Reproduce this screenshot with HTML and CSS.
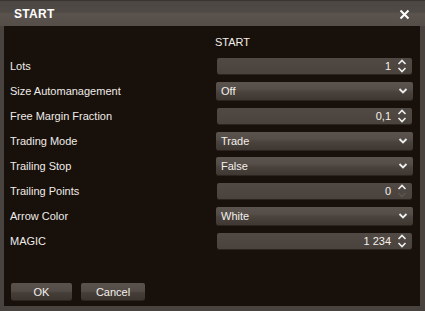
FILE: index.html
```html
<!DOCTYPE html>
<html>
<head>
<meta charset="utf-8">
<link rel="stylesheet" href="styles.css">
</head>
<body>
<div class="window">
  <div class="titlebar">
    <span class="title">START</span>
    <svg class="close" width="11" height="11" viewBox="0 0 11 11"><path d="M1.5 1.5 L9.5 9.5 M9.5 1.5 L1.5 9.5" stroke="#fff" stroke-width="2"/></svg>
  </div>
  <div class="body">
    <div class="header"><span></span><span class="htext">START</span></div>
    <div class="rows">
      <div class="row"><span class="label">Lots</span><div class="spin"><span class="val">1</span><span class="arrows"><svg width="10" height="14" viewBox="0 0 10 14"><path d="M1.5 5 L5 1.5 L8.5 5 M1.5 9 L5 12.5 L8.5 9" fill="none" stroke="#eee" stroke-width="1.6"/></svg></span></div></div>
      <div class="row"><span class="label">Size Automanagement</span><div class="select"><span>Off</span><svg width="10" height="8" viewBox="0 0 10 8"><path d="M1.5 2 L5 5.5 L8.5 2" fill="none" stroke="#eee" stroke-width="1.8"/></svg></div></div>
      <div class="row"><span class="label">Free Margin Fraction</span><div class="spin"><span class="val">0,1</span><span class="arrows"><svg width="10" height="14" viewBox="0 0 10 14"><path d="M1.5 5 L5 1.5 L8.5 5 M1.5 9 L5 12.5 L8.5 9" fill="none" stroke="#eee" stroke-width="1.6"/></svg></span></div></div>
      <div class="row"><span class="label">Trading Mode</span><div class="select"><span>Trade</span><svg width="10" height="8" viewBox="0 0 10 8"><path d="M1.5 2 L5 5.5 L8.5 2" fill="none" stroke="#eee" stroke-width="1.8"/></svg></div></div>
      <div class="row"><span class="label">Trailing Stop</span><div class="select"><span>False</span><svg width="10" height="8" viewBox="0 0 10 8"><path d="M1.5 2 L5 5.5 L8.5 2" fill="none" stroke="#eee" stroke-width="1.8"/></svg></div></div>
      <div class="row"><span class="label">Trailing Points</span><div class="spin"><span class="val">0</span><span class="arrows"><svg width="10" height="14" viewBox="0 0 10 14"><path d="M1.5 5 L5 1.5 L8.5 5" fill="none" stroke="#eee" stroke-width="1.6"/><path d="M1.5 9 L5 12.5 L8.5 9" fill="none" stroke="#5c544e" stroke-width="1.6"/></svg></span></div></div>
      <div class="row"><span class="label">Arrow Color</span><div class="select"><span>White</span><svg width="10" height="8" viewBox="0 0 10 8"><path d="M1.5 2 L5 5.5 L8.5 2" fill="none" stroke="#eee" stroke-width="1.8"/></svg></div></div>
      <div class="row"><span class="label">MAGIC</span><div class="spin"><span class="val">1 234</span><span class="arrows"><svg width="10" height="14" viewBox="0 0 10 14"><path d="M1.5 5 L5 1.5 L8.5 5 M1.5 9 L5 12.5 L8.5 9" fill="none" stroke="#eee" stroke-width="1.6"/></svg></span></div></div>
    </div>
    <div class="buttons">
      <button class="btn ok">OK</button>
      <button class="btn cancel">Cancel</button>
    </div>
  </div>
</div>
</body>
</html>
```
FILE: styles.css
```css
html, body {
  margin: 0;
  padding: 0;
  background: #48433e;
}
.window {
  width: 425px;
  height: 311px;
  box-sizing: border-box;
  background: #48433e;
  padding: 0 5px 5px 4px;
  display: flex;
  flex-direction: column;
  font-family: "Liberation Sans", Arial, sans-serif;
  color: #f0ece8;
}
.titlebar {
  height: 26px;
  flex: none;
  margin: 0 -5px 0 -4px;
  padding: 0 15px 0 14px;
  display: flex;
  align-items: center;
  justify-content: space-between;
  background: linear-gradient(to bottom, #4c4742 0px, #4f4a45 11px, #5b544e 13px, #544d47 26px);
  border-top: 1px solid #3a3531;
  box-sizing: border-box;
}
.title {
  font-weight: bold;
  font-size: 12px;
  color: #fff;
  letter-spacing: 0.3px;
}
.close {
  display: block;
  margin-top: 1px;
}
.body {
  flex: 1;
  background: #17100b;
  display: flex;
  flex-direction: column;
  padding: 0 7px 0 6px;
}
.header {
  display: grid;
  grid-template-columns: 205px 1fr;
  height: 30px;
  align-items: center;
  font-size: 11px;
  padding-top: 1px;
}
.htext {
  color: #f2eee9;
}
.rows {
  display: flex;
  flex-direction: column;
  gap: 7px;
}
.row {
  display: grid;
  grid-template-columns: 206px 1fr;
  height: 18px;
  align-items: center;
}
.label {
  font-size: 11px;
  color: #f0ece8;
}
.spin {
  height: 16px;
  margin: 0 1px;
  border-radius: 2px;
  background: linear-gradient(to bottom, #514943, #4a423c);
  box-shadow: 0 1px 0 #2a231e;
  display: flex;
  align-items: center;
  justify-content: flex-end;
  font-size: 11px;
  color: #f4f0ec;
}
.val {
  margin-right: 6px;
}
.arrows {
  width: 12px;
  margin-right: 3px;
  display: flex;
  align-items: center;
}
.arrows svg {
  display: block;
}
.select {
  height: 18px;
  border-radius: 2px;
  background: linear-gradient(to bottom, #5b534d 0px, #554d47 7px, #4a433d 10px, #3f3832 18px);
  box-shadow: 0 1px 0 #2a231e;
  display: flex;
  align-items: center;
  justify-content: space-between;
  padding: 0 5px 0 5px;
  font-size: 11px;
  color: #f4f0ec;
}
.select svg {
  display: block;
}
.buttons {
  margin-top: auto;
  margin-bottom: 6px;
  display: flex;
  gap: 9px;
  padding-left: 1px;
}
.btn {
  height: 17px;
  border: none;
  border-radius: 2px;
  background: linear-gradient(to bottom, #5a524c 0px, #534b45 8px, #453e38 10px, #3c3530 17px);
  box-shadow: 0 1px 0 #2a231e;
  color: #f4f0ec;
  font-family: "Liberation Sans", Arial, sans-serif;
  font-size: 11px;
  padding: 0;
}
.ok { width: 61px; }
.cancel { width: 64px; }
```
